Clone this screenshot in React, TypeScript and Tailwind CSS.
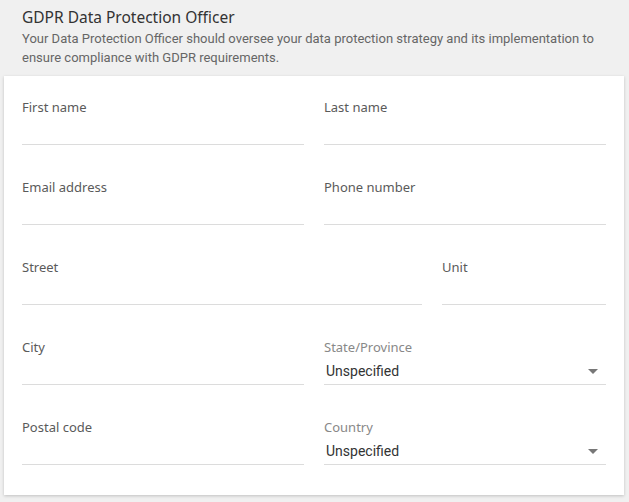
import React from "react";

function Field({ label, className = "" }: { label: string; className?: string }) {
  return (
    <div className={`flex flex-col ${className}`}>
      <label className="text-[13px] leading-4 text-[#5a5a5a] font-['Noto_Sans',sans-serif]">{label}</label>
      <div className="h-[30px] border-b border-[#dcdcdc]" />
    </div>
  );
}

function SelectField({ label, className = "" }: { label: string; className?: string }) {
  return (
    <div className={`flex flex-col ${className}`}>
      <label className="text-[13px] leading-4 text-[#888] font-['Noto_Sans',sans-serif]">{label}</label>
      <div className="h-[30px] border-b border-[#dcdcdc] flex items-center justify-between pl-[2px] pr-[8px] pt-[4px]">
        <span className="text-[14px] text-[#333] font-['Roboto',sans-serif]">Unspecified</span>
        <svg width="10" height="5" viewBox="0 0 10 5"><path d="M0 0 L10 0 L5 5 Z" fill="#777" /></svg>
      </div>
    </div>
  );
}

export default function App() {
  return (
    <div className="w-[629px] h-[502px] bg-[#f0f0f0] overflow-hidden">
      <div className="pl-[22px] pr-4 pt-[7px]">
        <h2 className="text-[15.5px] leading-5 text-[#333] font-['Noto_Sans',sans-serif]">GDPR Data Protection Officer</h2>
        <p className="mt-[2px] text-[13px] leading-[19px] text-[#666] font-['Roboto',sans-serif]">
          Your Data Protection Officer should oversee your data protection strategy and its implementation to ensure compliance with GDPR requirements.
        </p>
      </div>
      <div className="mx-[4px] mt-[9px] w-[620px] bg-white shadow-[0_1px_3px_rgba(0,0,0,0.2)] px-[18px] pt-[23px] pb-[30px] flex flex-col gap-[34px]">
        <div className="grid grid-cols-2 gap-x-[20px]">
          <Field label="First name" />
          <Field label="Last name" />
        </div>
        <div className="grid grid-cols-2 gap-x-[20px]">
          <Field label="Email address" />
          <Field label="Phone number" />
        </div>
        <div className="grid grid-cols-[400px_1fr] gap-x-[20px]">
          <Field label="Street" />
          <Field label="Unit" />
        </div>
        <div className="grid grid-cols-2 gap-x-[20px]">
          <Field label="City" />
          <SelectField label="State/Province" />
        </div>
        <div className="grid grid-cols-2 gap-x-[20px]">
          <Field label="Postal code" />
          <SelectField label="Country" />
        </div>
      </div>
    </div>
  );
}
